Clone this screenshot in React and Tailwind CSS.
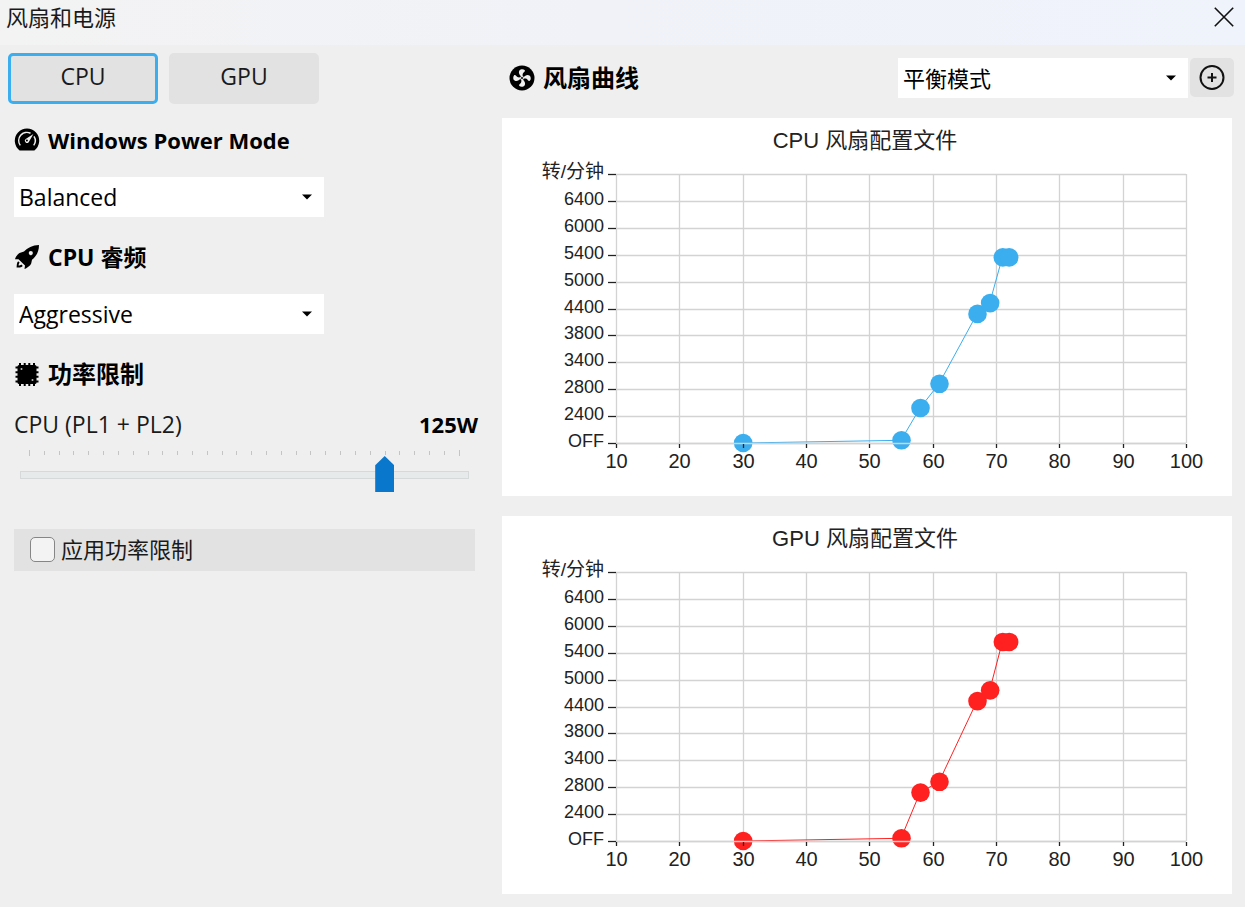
import React, { useState } from "react";

const SPEED_LABELS = ["OFF", "2400", "2800", "3400", "3800", "4400", "5000", "5400", "6000", "6400", "转/分钟"];
const TEMPERATURES = [10, 20, 30, 40, 50, 60, 70, 80, 90, 100];

// [temperature, fan speed in percent]
const CPU_CURVE = [[30, 0], [55, 1], [58, 13], [61, 22], [67, 48], [69, 52], [71, 69], [72, 69]];
const GPU_CURVE = [[30, 0], [55, 1], [58, 18], [61, 22], [67, 52], [69, 56], [71, 74], [72, 74]];

const GaugeIcon = () => (
  <svg viewBox="0 0 26 26" className="size-[26px] shrink-0" aria-hidden="true">
    <path d="M5.600 23.400A12.200 12.200 0 1 1 20.400 23.400Z" />
    <path
      d="M6.300 18.400A8.200 8.200 0 0 1 16.500 6.200M20 9.300A8.200 8.200 0 0 1 19.700 18.400"
      fill="none"
      stroke="#efefef"
      strokeWidth="1.500"
    />
    <path d="M19.400 6.900 14.700 15.200a2.200 2.200 0 1 1-3-3.200Z" fill="#efefef" />
    <circle cx="12.900" cy="13.600" r="1" />
  </svg>
);

const RocketIcon = () => (
  <svg viewBox="0 0 26 26" className="size-[26px] shrink-0" aria-hidden="true">
    <path
      fillRule="evenodd"
      d="M25 1C18.500 1 13.500 4 10 7.500L5.500 9C4 9.800 1.300 13 1 15.300L4.500 15.300 11 21.400 10.500 25C12.500 24.500 16.500 21.500 17.200 19.500L18 15.800C22.500 12 25 7.500 25 1ZM16.800 7a2.100 2.100 0 1 1 0 4.200 2.100 2.100 0 0 1 0-4.200Z"
    />
    <path d="M4.200 17.300C2.600 18.800 2.800 21.500 2.600 23.600 4.700 23.400 7.300 23.500 8.800 21.900L7.400 20.500C6.600 21.300 5.500 21.500 4.600 21.600 4.700 20.600 4.900 19.500 5.700 18.800Z" />
  </svg>
);

const ChipIcon = () => (
  <svg viewBox="0 0 26 26" className="size-[26px] shrink-0" aria-hidden="true">
    <path
      d="M6 2v23M10.700 2v23M15.300 2v23M20 2v23M1.500 6.500h23M1.500 11.200h23M1.500 15.800h23M1.500 20.500h23"
      stroke="#000"
      strokeWidth="2"
    />
    <rect x="3.500" y="4" width="19" height="19" rx="1.500" />
    <circle cx="7.500" cy="8" r="1" fill="#bbb" />
    <circle cx="18.500" cy="19" r="1" fill="#bbb" />
  </svg>
);

const FanIcon = () => (
  <svg viewBox="0 0 26 26" className="size-[26px] shrink-0" aria-hidden="true">
    <circle cx="13" cy="13" r="12.500" />
    <g fill="#efefef">
      {[0, 90, 180, 270].map((angle) => (
        <path
          key={angle}
          transform={`rotate(${angle} 13 13)`}
          d="M12.400 11.600C10.200 10 9.200 7.500 10.400 5.600 11.400 4 14.300 3.800 15.600 5 16.300 5.700 15.700 6.700 14.900 7.300 13.800 8.100 13.200 9.800 13.900 11.600Z"
        />
      ))}
      <circle cx="13" cy="13" r="1.900" />
    </g>
    <circle cx="13" cy="13" r="1" />
  </svg>
);

const PlusIcon = () => (
  <svg viewBox="0 0 26 26" className="size-[26px]" fill="none" stroke="#111" strokeWidth="2" aria-hidden="true">
    <circle cx="13" cy="12.500" r="11.500" />
    <path d="M13 8v9M8.500 12.500h9" />
  </svg>
);

const Dropdown = ({ label, options, className = "" }) => (
  <div className={`relative h-10 ${className}`}>
    <select
      aria-label={label}
      className="h-full w-full appearance-none bg-white pl-[5px] pr-8 text-black outline-none"
    >
      {options.map((option) => (
        <option key={option}>{option}</option>
      ))}
    </select>
    <svg
      viewBox="0 0 10 6"
      className="pointer-events-none absolute right-3 top-1/2 h-1.5 w-2.5 -translate-y-1/2"
      aria-hidden="true"
    >
      <path d="M0 0.500h10L5 5.500Z" />
    </svg>
  </div>
);

const SectionTitle = ({ icon, children, className = "" }) => (
  <h2 className={`flex h-9 items-center gap-2 font-bold text-black ${className}`}>
    {icon}
    <span>{children}</span>
  </h2>
);

const FanChart = ({ title, curve, color }) => {
  const toX = (temperature) => 114 + ((temperature - 10) * 570) / 90;
  const toY = (percent) => 325 - percent * 2.69;

  return (
    <div className="bg-white">
      <svg
        viewBox="0 0 730 378"
        className="block w-full font-['Liberation_Sans','Noto_Sans_CJK_SC',sans-serif]"
        role="img"
        aria-label={title}
      >
        <text x="363" y="30" textAnchor="middle" fontSize="22" fill="#222">
          {title}
        </text>

        {SPEED_LABELS.map((label, i) => {
          const y = Math.round(toY(i * 10)) + 0.5;
          return (
            <g key={label}>
              <path d={`M114 ${y}H684`} stroke="#d3d3d3" strokeWidth="1.300" />
              <text x="102" y={y + 3} textAnchor="end" fontSize={i === 10 ? 19 : 18} fill="#222">
                {label}
              </text>
            </g>
          );
        })}
        {TEMPERATURES.map((temperature) => {
          const x = Math.round(toX(temperature)) + 0.5;
          return (
            <g key={temperature}>
              <path d={`M${x} 56V325`} stroke="#d3d3d3" strokeWidth="1.300" />
              <text x={x} y="350" textAnchor="middle" fontSize="20" fill="#222">
                {temperature}
              </text>
            </g>
          );
        })}

        <polyline
          points={curve.map(([t, p]) => `${toX(t)},${toY(p)}`).join(" ")}
          fill="none"
          stroke={color}
          strokeWidth="1"
        />
        {curve.map(([t, p]) => (
          <circle key={t} cx={toX(t) + 0.5} cy={toY(p)} r="9.300" fill={color} />
        ))}

        {/* axis and tick marks stay above the points */}
        <path d="M114 325.500H684" stroke="#d3d3d3" strokeWidth="1.300" />
        {SPEED_LABELS.map((label, i) => (
          <path key={label} d={`M106 ${Math.round(toY(i * 10)) + 0.5}h8`} stroke="#222" strokeWidth="1.300" />
        ))}
        {TEMPERATURES.map((t) => (
          <path key={t} d={`M${Math.round(toX(t)) + 0.5} 326v4`} stroke="#222" strokeWidth="1.300" />
        ))}
      </svg>
    </div>
  );
};

const PowerSlider = ({ value, onChange }) => (
  <div className="mt-2.5 w-[449px]">
    <div className="flex h-[7px] items-start justify-between px-[9px]" aria-hidden="true">
      {Array.from({ length: 30 }, (_, i) => (
        <span key={i} className="mt-px h-1 w-px bg-[#c4c4c4] first:mt-0 first:h-1.5 last:mt-0 last:h-1.5" />
      ))}
    </div>
    <input
      id="power-limit"
      type="range"
      min="5"
      max="150"
      step="5"
      value={value}
      onChange={(e) => onChange(Number(e.target.value))}
      className="block h-9 w-full appearance-none bg-transparent [&::-webkit-slider-runnable-track]:h-2 [&::-webkit-slider-runnable-track]:border [&::-webkit-slider-runnable-track]:border-[#d6d9d9] [&::-webkit-slider-runnable-track]:bg-[#e7eaea] [&::-webkit-slider-thumb]:-mt-4 [&::-webkit-slider-thumb]:h-9 [&::-webkit-slider-thumb]:w-[19px] [&::-webkit-slider-thumb]:appearance-none [&::-webkit-slider-thumb]:bg-[#0877cc] [&::-webkit-slider-thumb]:[clip-path:polygon(50%_0,100%_26%,100%_100%,0_100%,0_26%)]"
    />
  </div>
);

const App = () => {
  const [device, setDevice] = useState("CPU");
  const [powerLimit, setPowerLimit] = useState(125);
  const [applyLimit, setApplyLimit] = useState(false);

  return (
    <div className="min-h-screen bg-[#efefef] font-['Open_Sans','Noto_Sans_CJK_SC',sans-serif] text-[23px] leading-8 text-[#1a1a1a]">
      <header className="flex h-[45px] items-start justify-between bg-linear-to-r from-[#f3f3f3] via-[#f0f2f8] to-[#eff3fb] pl-1.5 pr-[11px]">
        <h1 className="pt-px text-[22px]">风扇和电源</h1>
        <button type="button" aria-label="关闭" className="mt-[7px]">
          <svg viewBox="0 0 20 20" className="size-5" fill="none" stroke="#111" strokeWidth="1.600">
            <path d="M0.800 0.800 19.200 19.200M19.200 0.800 0.800 19.200" />
          </svg>
        </button>
      </header>

      <main className="flex">
        <section className="w-[502px] shrink-0 pt-2">
          <div className="flex gap-[11px] pl-2">
            {["CPU", "GPU"].map((name) => (
              <button
                key={name}
                type="button"
                onClick={() => setDevice(name)}
                className={`h-[51px] w-[150px] rounded-[5px] border-3 bg-[#e2e2e2] pb-1.5 ${
                  device === name ? "border-[#3aaeef]" : "border-[#e2e2e2]"
                }`}
              >
                {name}
              </button>
            ))}
          </div>

          <div className="pl-3.5">
            <SectionTitle icon={<GaugeIcon />} className="mt-[18px] mb-[19px] text-[22px]">
              Windows Power Mode
            </SectionTitle>
            <Dropdown label="Windows Power Mode" options={["Balanced", "Silent", "Turbo"]} className="w-[310px]" />

            <SectionTitle icon={<RocketIcon />} className="mt-[22px] mb-[19px] text-[23px]">
              CPU 睿频
            </SectionTitle>
            <Dropdown label="CPU 睿频" options={["Aggressive", "Enabled", "Disabled"]} className="w-[310px]" />

            <SectionTitle icon={<ChipIcon />} className="mt-[22px] mb-4 text-[24px]">
              功率限制
            </SectionTitle>
            <div className="flex items-center justify-between pr-6">
              <label htmlFor="power-limit">CPU (PL1 + PL2)</label>
              <output htmlFor="power-limit" className="text-[22px] font-bold text-black">
                {powerLimit}W
              </output>
            </div>
            <div className="pl-1.5">
              <PowerSlider value={powerLimit} onChange={setPowerLimit} />
            </div>

            <label className="mt-9 flex h-[42px] w-[461px] items-center gap-1.5 bg-[#e2e2e2] pb-0.5 pl-4 text-[22px]">
              <input
                type="checkbox"
                checked={applyLimit}
                onChange={(e) => setApplyLimit(e.target.checked)}
                className="size-[25px] appearance-none rounded-[5px] border border-[#868686] bg-[#f3f3f3] checked:bg-[#0877cc]"
              />
              应用功率限制
            </label>
          </div>
        </section>

        <section className="min-w-0 flex-1 pr-[13px] pt-[13px]">
          <div className="mb-5 flex h-10 items-center justify-between pl-[7px]">
            <SectionTitle icon={<FanIcon />} className="text-[24px]">
              风扇曲线
            </SectionTitle>
            <div className="-mr-0.5 flex gap-0.5 text-[22px]">
              <Dropdown label="性能模式" options={["平衡模式", "静音模式", "增强模式"]} className="w-[290px]" />
              <button
                type="button"
                aria-label="添加"
                className="flex h-[39px] w-11 items-center justify-center rounded-[5px] bg-[#e2e2e2]"
              >
                <PlusIcon />
              </button>
            </div>
          </div>
          <div className="flex flex-col gap-5">
            <FanChart title="CPU 风扇配置文件" curve={CPU_CURVE} color="#3aaeef" />
            <FanChart title="GPU 风扇配置文件" curve={GPU_CURVE} color="#ff2020" />
          </div>
        </section>
      </main>
    </div>
  );
};

export default App;
